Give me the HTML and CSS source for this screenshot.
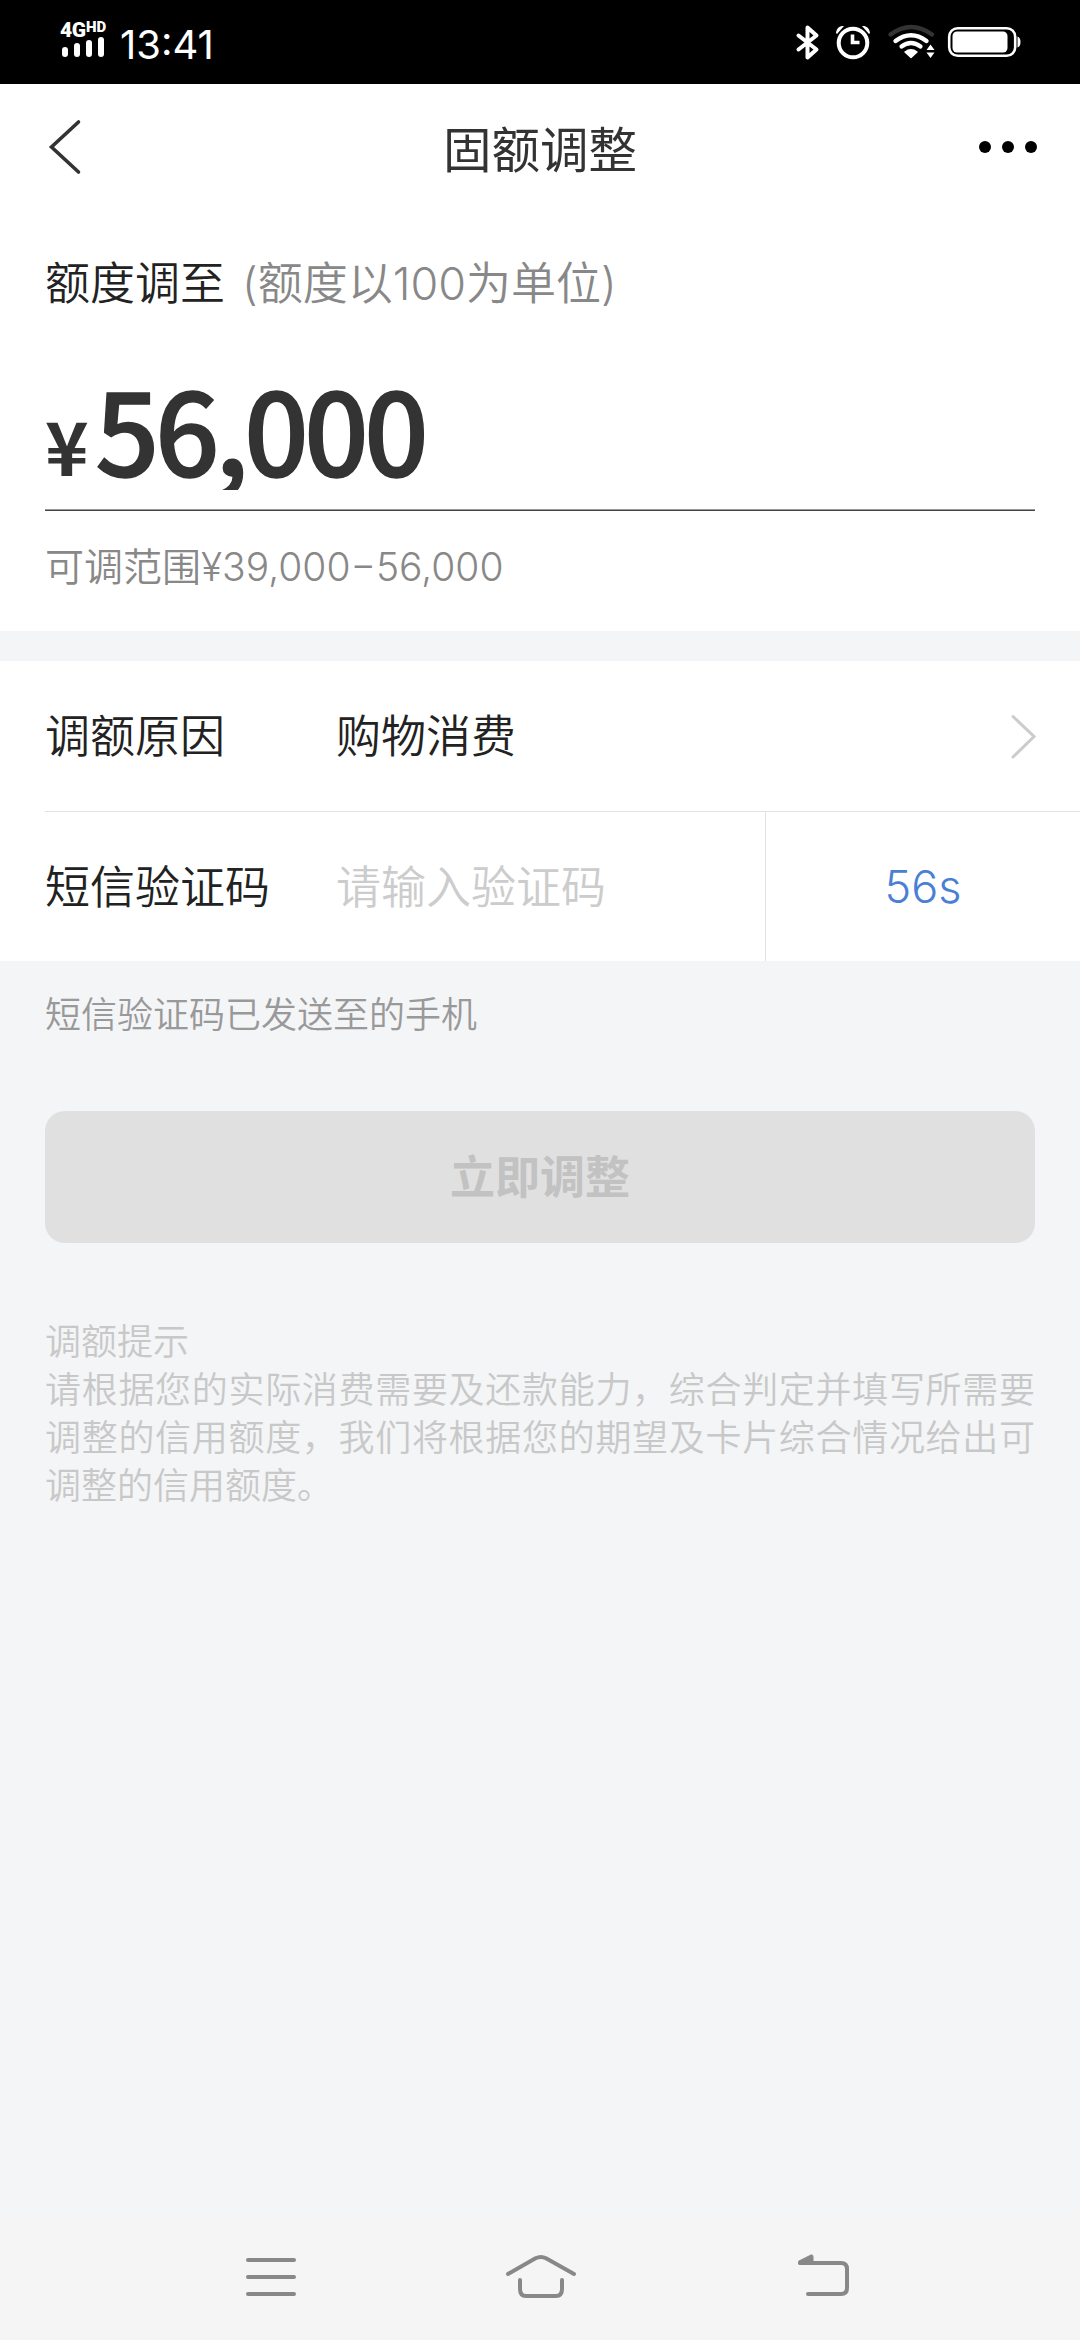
FILE: index.html
```html
<!DOCTYPE html>
<html lang="zh-CN">
<head>
<meta charset="utf-8">
<title>固额调整</title>
<link rel="stylesheet" href="styles.css">
</head>
<body>
<div class="screen">
  <div class="status">
    <div class="signal">
      <div class="network"><span class="net-type">4G</span><span class="net-hd">HD</span></div>
      <div class="bars"><i class="bar b1"></i><i class="bar b2"></i><i class="bar b3"></i><i class="bar b4"></i></div>
    </div>
    <span class="clock">13:41</span>
    <svg class="status-icons" width="230" height="44" viewBox="794 20 230 44" fill="none" stroke="#fff" stroke-linecap="round" stroke-linejoin="round">
      <path d="M798.5 35.5 816.5 49.5 807.5 57.5V27.5L816.5 35.5 798.5 49.5" stroke-width="4"/>
      <circle cx="853" cy="43" r="14.3" stroke-width="4"/>
      <path d="M852.5 34.5V42.500H859.500" stroke-width="3.600" stroke-linecap="butt" stroke-linejoin="miter"/>
      <path d="M836 33C836.500 28 840 25.500 844 26L837 34ZM870 33C869.500 28 866 25.500 862 26L869 34Z" fill="#fff" stroke="none"/>
      <path d="M890.500 34.500Q911 19.500 932 34.500" stroke="#333" stroke-width="4.200"/>
      <path d="M895.500 41Q911 29.500 926.500 41" stroke-width="4.400"/>
      <path d="M901.500 46.500Q911 39.500 920.500 46.500" stroke-width="4.200"/>
      <path d="M905 52Q911 47.500 917 52L911 57.500Z" fill="#fff" stroke-width="1.500"/>
      <path d="M926.500 50 930.500 44.500 934.500 50ZM926.500 52.500H934.500L930.500 58Z" fill="#fff" stroke="none"/>
      <rect x="949.200" y="28.200" width="66" height="27.600" rx="8.500" stroke-width="2.600"/>
      <rect x="952.500" y="31.500" width="55" height="21" rx="4.500" fill="#fff" stroke="none"/>
      <path d="M1017.500 36.500Q1020.500 37.500 1020.500 42T1017.500 47.500Z" fill="#fff" stroke="none"/>
    </svg>
  </div>

  <header class="header">
    <svg class="back" width="36" height="58" viewBox="47 118 36 58" fill="none" stroke="#333" stroke-width="3.600" stroke-linecap="round"><path d="M78.500 122 51.500 147 78.500 172"/></svg>
    <h1 class="title">固额调整</h1>
    <div class="more"><i class="dot"></i><i class="dot"></i><i class="dot"></i></div>
  </header>

  <section class="limit">
    <div class="limit-label">额度调至<span class="limit-unit">(额度以100为单位)</span></div>
    <div class="amount"><span class="currency">¥</span><span class="amount-value">56,000</span></div>
    <div class="range">可调范围<span class="range-num">¥39,000−56,000</span></div>
  </section>

  <section class="form">
    <div class="row">
      <span class="label">调额原因</span>
      <span class="value">购物消费</span>
      <svg class="chevron" width="27" height="48" viewBox="1009 714 27 48" fill="none" stroke="#ccc" stroke-width="3" stroke-linecap="round"><path d="M1013 718.500 1034 738.500 1013 759"/></svg>
    </div>
    <div class="row code-row">
      <span class="label">短信验证码</span>
      <span class="value placeholder">请输入验证码</span>
      <span class="countdown">56s</span>
    </div>
  </section>

  <p class="sent">短信验证码已发送至的手机</p>
  <div class="submit">立即调整</div>
  <div class="tips">
    <p class="tips-title">调额提示</p>
    <p class="tips-body">请根据您的实际消费需要及还款能力，综合判定并填写所需要调整的信用额度，我们将根据您的期望及卡片综合情况给出可调整的信用额度。</p>
  </div>

  <nav class="nav">
    <svg width="58" height="48" viewBox="242 2253 58 48"><path d="M248 2260H294M248 2277H294M248 2294H294"/></svg>
    <svg class="home" width="76" height="48" viewBox="503 2253 76 48"><path d="M508 2274 535.500 2258.300Q541 2255.500 546 2258.300L574 2274M520 2280V2289Q520 2296 526 2296H556Q562 2296 562 2289V2280"/></svg>
    <svg class="return" width="58" height="48" viewBox="795 2253 58 48"><path d="M808 2294H841Q847 2294 847 2288V2269Q847 2263 841 2263H800"/><path class="solid" d="M799 2261 811 2255Q813 2254.500 813 2256.500V2264H799Z"/></svg>
  </nav>
</div>
</body>
</html>
```
FILE: styles.css
```css
* { box-sizing: border-box; }
body, h1, p { margin: 0; }
body {
  width: 1080px;
  background: #f4f5f7;
  color: #222;
  font-family: Inter, "Noto Sans CJK SC", sans-serif;
  font-weight: 350;
}
svg { display: block; flex: none; }
.screen { display: flex; flex-direction: column; height: 2340px; overflow: hidden; }

.status {
  display: flex;
  align-items: flex-start;
  height: 84px;
  padding: 20px 56px 0 60px;
  background: #000;
  color: #fff;
}
.signal { width: 60px; }
.network { display: flex; height: 17px; font-family: Roboto, sans-serif; font-weight: 900; }
.net-type { width: 26px; font-size: 21px; line-height: 20px; letter-spacing: -0.5px; }
.net-hd { font-size: 15px; line-height: 15px; }
.bars { display: flex; align-items: flex-end; gap: 6px; height: 20px; padding-left: 2px; }
.bar { width: 6px; border-radius: 3px; background: #fff; }
.b1 { height: 10px; }
.b2 { height: 14px; }
.b3 { height: 17px; }
.b4 { height: 20px; }
.clock { font-size: 40px; line-height: 50px; font-weight: 400; }
.status-icons { margin-left: auto; }

.header {
  display: grid;
  grid-template-columns: 1fr auto 1fr;
  align-items: center;
  height: 132px;
  padding: 0 43px 0 47px;
  background: #fff;
}
.title { margin: 2px 4px 0 0; font-size: 48.5px; line-height: 60px; font-weight: 400; color: #333; }
.back { margin-bottom: 6px; }
.more { display: flex; justify-content: flex-end; gap: 11px; margin-bottom: 6px; }
.dot { width: 12px; height: 12px; border-radius: 50%; background: #000; }

.limit { height: 415px; padding: 35px 45px 0; background: #fff; }
.limit-label { height: 66px; font-size: 45px; line-height: 66px; }
.limit-unit { margin-left: 17px; color: #888; }
.amount {
  display: flex;
  align-items: baseline;
  height: 194px;
  padding-top: 49px;
  border-bottom: 1px solid #444;
  box-shadow: inset 0 -1px #999;
  color: #333;
  font-family: "Noto Sans CJK SC", sans-serif;
  font-weight: 700;
  line-height: 122px;
}
.currency { width: 50px; padding-top: 2px; font-size: 74px; }
.amount-value {
  font-size: 113px;
  font-weight: 500;
  letter-spacing: -4.4px;
  -webkit-text-stroke: 1.5px #333;
  clip-path: inset(0 0 -2px);
}
.range { height: 110px; font-size: 39px; line-height: 112px; color: #888; }

.form { margin-top: 30px; background: #fff; }
.row { display: flex; align-items: center; height: 150px; margin-left: 45px; padding-right: 44px; font-size: 45px; }
.label { width: 291px; }
.label, .value { padding-bottom: 5px; }
.chevron { margin-left: auto; }
.code-row { border-top: 1px solid #e3e3e3; padding-right: 0; }
.placeholder { color: #ccc; }
.countdown {
  display: flex;
  align-items: center;
  justify-content: center;
  align-self: stretch;
  width: 315px;
  margin-left: auto;
  border-left: 1px solid #e3e3e3;
  color: #4a80d4;
}

.sent { margin: 27px 45px 0; font-size: 36px; line-height: 54px; color: #999; }
.submit {
  display: flex;
  align-items: center;
  justify-content: center;
  height: 132px;
  margin: 69px 45px 0;
  padding-bottom: 6px;
  border-radius: 20px;
  background: #e0e0e0;
  color: #c2c2c2;
  font-size: 45px;
  font-weight: 700;
}
.tips { margin: 75px 45px 0; font-size: 36px; line-height: 48px; color: #c8c8c8; }
.tips-body { text-align: justify; }

.nav {
  display: flex;
  height: 126px;
  margin-top: auto;
  padding: 39px 0 0 242px;
  background: #f5f5f5;
  fill: none;
  stroke: #888;
  stroke-width: 4;
  stroke-linecap: round;
  stroke-linejoin: round;
}
.home { margin-left: 203px; }
.return { margin-left: 216px; }
.solid { fill: #888; stroke-width: 1; }
```
